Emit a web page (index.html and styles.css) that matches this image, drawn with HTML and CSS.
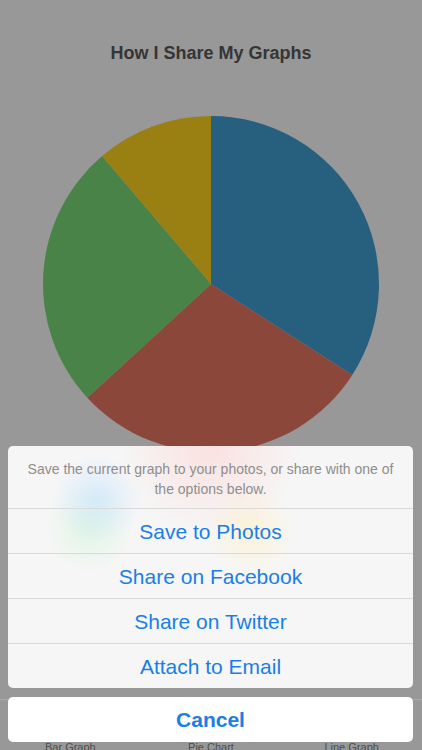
FILE: index.html
```html
<!DOCTYPE html>
<html>
<head>
<meta charset="utf-8">
<link rel="stylesheet" href="styles.css">
</head>
<body>
<div class="screen">
  <h1 class="title">How I Share My Graphs</h1>
  <div class="chart">
    <svg width="340" height="340" viewBox="-170 -170 340 340">
      <path d="M0 0 L0 -168 A168 168 0 0 1 141.3 90.9 Z" fill="#27607f"/>
      <path d="M0 0 L141.3 90.9 A168 168 0 0 1 -123.7 113.7 Z" fill="#8c473b"/>
      <path d="M0 0 L-123.7 113.7 A168 168 0 0 1 -108.9 -127.9 Z" fill="#4a8347"/>
      <path d="M0 0 L-108.9 -127.9 A168 168 0 0 1 0 -168 Z" fill="#9a7f12"/>
    </svg>
  </div>
  <div class="spacer"></div>
  <div class="tabbar">
    <span class="tab">Bar Graph</span>
    <span class="tab">Pie Chart</span>
    <span class="tab">Line Graph</span>
  </div>
</div>
<div class="sheet">
  <div class="group">
    <div class="message">Save the current graph to your photos, or share with one of the options below.</div>
    <div class="action">Save to Photos</div>
    <div class="action">Share on Facebook</div>
    <div class="action">Share on Twitter</div>
    <div class="action">Attach to Email</div>
  </div>
  <div class="cancel">Cancel</div>
</div>
</body>
</html>
```
FILE: styles.css
```css
html, body {
  margin: 0;
  padding: 0;
}
body {
  width: 422px;
  height: 750px;
  overflow: hidden;
  background: #989898;
  font-family: "Liberation Sans", Arial, sans-serif;
  position: relative;
}
.screen {
  height: 750px;
  display: flex;
  flex-direction: column;
}
.title {
  margin: 43px 0 0 0;
  text-align: center;
  font-size: 18px;
  font-weight: bold;
  color: #353535;
  line-height: 20px;
}
.chart {
  display: flex;
  justify-content: center;
  margin-top: 51px;
}
.chart svg {
  display: block;
}
.spacer {
  flex: 1;
}
.tabbar {
  height: 50px;
  border-top: 1px solid #a9a9a9;
  display: grid;
  grid-template-columns: 1fr 1fr 1fr;
  align-items: end;
}
.tab {
  font-size: 11px;
  color: #4e4e4e;
  text-align: center;
  line-height: 12px;
  margin-bottom: -3px;
}
.sheet {
  position: absolute;
  left: 8px;
  right: 9px;
  bottom: 8px;
  display: flex;
  flex-direction: column;
  gap: 9px;
}
.group {
  border-radius: 5px;
  overflow: hidden;
  background:
    radial-gradient(circle at 50% 0%, rgba(255, 200, 195, 0.45) 0, rgba(255, 220, 215, 0) 90px),
    radial-gradient(circle at 22% 22%, rgba(190, 225, 255, 0.55) 0, rgba(200, 230, 255, 0) 45px),
    radial-gradient(circle at 20% 34%, rgba(205, 245, 210, 0.5) 0, rgba(210, 245, 215, 0) 45px),
    radial-gradient(circle at 60% 35%, rgba(255, 240, 190, 0.55) 0, rgba(255, 240, 195, 0) 45px),
    #f6f6f6;
}
.message {
  padding: 13px 18px 9px 18px;
  text-align: center;
  font-size: 14px;
  line-height: 20px;
  color: #8e8e8e;
}
.action {
  height: 44px;
  border-top: 1px solid #dadada;
  display: flex;
  align-items: center;
  justify-content: center;
  font-size: 21px;
  color: #1a7ee6;
  padding-top: 1px;
  box-sizing: border-box;
  height: 45px;
}
.cancel {
  height: 45px;
  border-radius: 5px;
  background: #ffffff;
  display: flex;
  align-items: center;
  justify-content: center;
  font-size: 21px;
  font-weight: bold;
  color: #1a7ee6;
}
```
